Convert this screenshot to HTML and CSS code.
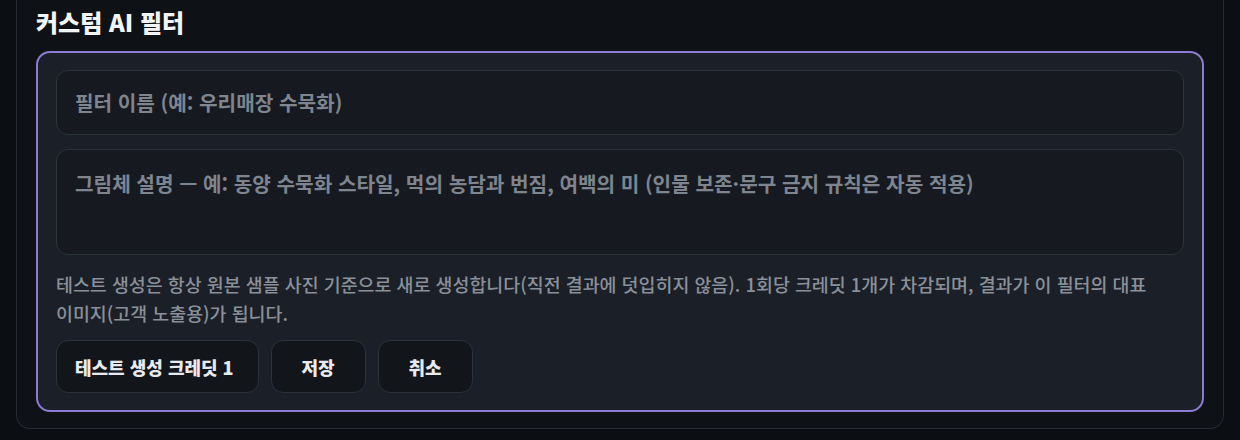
FILE: index.html
```html
<!DOCTYPE html>
<html lang="ko">
<head>
<meta charset="utf-8">
<link rel="stylesheet" href="styles.css">
</head>
<body>
<div class="page">
  <section class="card">
    <h2 class="title">커스텀 AI 필터</h2>
    <div class="editor">
      <input class="field" type="text" placeholder="필터 이름 (예: 우리매장 수묵화)">
      <textarea class="field area" placeholder="그림체 설명 — 예: 동양 수묵화 스타일, 먹의 농담과 번짐, 여백의 미 (인물 보존·문구 금지 규칙은 자동 적용)"></textarea>
      <p class="help">테스트 생성은 항상 원본 샘플 사진 기준으로 새로 생성합니다(직전 결과에 덧입히지 않음). 1회당 크레딧 1개가 차감되며, 결과가 이 필터의 대표 이미지(고객 노출용)가 됩니다.</p>
      <div class="actions">
        <button class="btn btn-wide">테스트 생성 크레딧 1</button>
        <button class="btn">저장</button>
        <button class="btn">취소</button>
      </div>
    </div>
  </section>
</div>
</body>
</html>
```

FILE: styles.css
```css
html, body {
  margin: 0;
  padding: 0;
  background: #0b0e12;
  font-family: "Noto Sans CJK KR", "Noto Sans", sans-serif;
}
.page {
  padding: 0 16px 12px 16px;
  height: 440px;
  box-sizing: border-box;
}
.card {
  background: #0e1115;
  border: 1px solid #262b33;
  border-top: none;
  border-radius: 0 0 14px 14px;
  padding: 6px 19px 16px 19px;
}
.title {
  margin: 0 0 13px 0;
  color: #f3f4f6;
  font-size: 24px;
  font-weight: 800;
  line-height: 32px;
}
.editor {
  background: #1b2028;
  border: 2px solid #8c7bd0;
  border-radius: 14px;
  padding: 17px 18px 17px 18px;
}
.field {
  display: block;
  width: 100%;
  box-sizing: border-box;
  background: #161a20;
  border: 1px solid #2c323b;
  border-radius: 12px;
  color: #e5e7eb;
  font-family: "Noto Sans CJK KR", "Noto Sans", sans-serif;
  font-size: 20.2px;
  font-weight: 600;
  height: 65px;
  padding: 0 18px;
  outline: none;
}
.field::placeholder {
  color: #7e858f;
  opacity: 1;
}
.area {
  margin-top: 14px;
  height: 106px;
  padding: 20px 18px;
  resize: none;
  line-height: 28px;
}
.help {
  margin: 15px 0 12px 0;
  color: #8a9099;
  font-size: 18.4px;
  font-weight: 500;
  line-height: 29px;
  word-break: keep-all;
}
.actions {
  display: flex;
  gap: 12px;
}
.btn {
  height: 53px;
  min-width: 95px;
  padding: 0 20px;
  background: #12151a;
  border: 1px solid #2c323b;
  border-radius: 12px;
  color: #e8eaed;
  font-family: "Noto Sans CJK KR", "Noto Sans", sans-serif;
  font-size: 18px;
  font-weight: 800;
}
.btn-wide {
  padding: 0 24px 0 18px;
}
```
